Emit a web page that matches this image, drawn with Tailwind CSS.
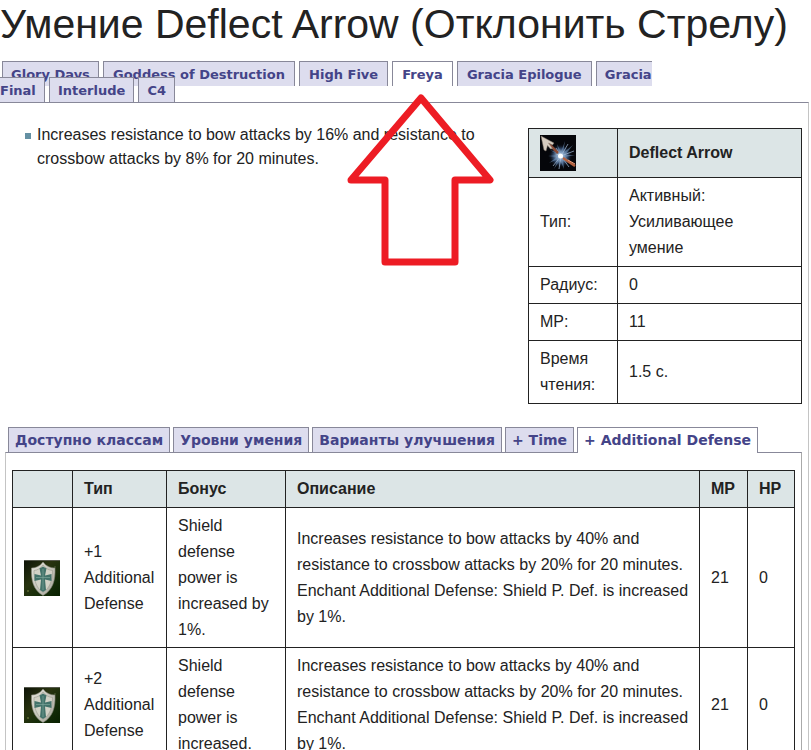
<!DOCTYPE html>
<html lang="ru">
<head>
    <meta charset="UTF-8">
    <meta name="viewport" content="width=device-width, initial-scale=1.0">
    <title>Умение Deflect Arrow (Отклонить Стрелу)</title>
    <script src="https://cdn.jsdelivr.net/npm/@tailwindcss/browser@4"></script>
</head>
<body class="bg-white text-[#222222] font-['Liberation_Sans',Arial,sans-serif] text-base">
    <!-- Shared shield icon -->
    <svg class="absolute size-0">
        <defs>
            <linearGradient id="shieldBg" x1="0" y1="0" x2="1" y2="1">
                <stop offset="0" stop-color="#0d1207" />
                <stop offset=".4" stop-color="#28330f" />
                <stop offset=".7" stop-color="#142c08" />
                <stop offset="1" stop-color="#082000" />
            </linearGradient>
            <linearGradient id="shieldFace" x1="0" y1="0" x2="1" y2="1">
                <stop offset="0" stop-color="#e6e5dc" />
                <stop offset="1" stop-color="#a5a599" />
            </linearGradient>
        </defs>
        <symbol id="shield" viewBox="0 0 36 36">
            <rect width="36" height="36" fill="url(#shieldBg)" />
            <path d="M0 .5H36" stroke="#55584c" />
            <circle cx="4" cy="31" r="1" fill="#5c6a30" />
            <circle cx="31" cy="7" r="1" fill="#41502a" />
            <path d="M19 2C16 6 12 8 7.500 8C7 20 9 30 19 35.500C29 30 31.500 20 31 8C26 8 22 6 19 2Z" fill="url(#shieldFace)" stroke="#85867b" stroke-width=".6" />
            <path d="M19 5C16.500 8.500 14 10 10 10.500C10 20 12 28 19 32.500C26 28 28.500 20 28.500 10.500C24.500 10 21.500 8.500 19 5Z" fill="#d2d2c6" stroke="#9a9b8f" stroke-width=".6" />
            <path d="M15.500 8.500L19 6.500L22.500 8.500L21 15.500L27.500 14V21L21 19.500L22 30L19 32L16 30L17 19.500L10.500 21V14L17 15.500Z" fill="#43736a" />
            <path d="M19 9V30M12 17.500H26" stroke="#7ba398" stroke-width=".7" />
        </symbol>
    </svg>

    <h1 class="text-[41px] leading-[48px] whitespace-nowrap">Умение Deflect Arrow (Отклонить Стрелу)</h1>

    <!-- Chronicle tabs -->
    <nav class="pt-[19px] pb-[3px]">
        <ul class="max-w-[690px] indent-[2px] font-['DejaVu_Sans',Verdana,sans-serif] text-[13px] leading-[16px]">
            <li class="inline"><a href="#" class="border border-b-0 border-[#888899] bg-[#ddddee] px-[8px] pt-[5px] pb-[4px] font-bold text-[#444488]">Glory Days</a></li>
            <li class="inline"><a href="#" class="border border-b-0 border-[#888899] bg-[#ddddee] px-[9px] pt-[5px] pb-[4px] font-bold text-[#444488]">Goddess of Destruction</a></li>
            <li class="inline"><a href="#" class="border border-b-0 border-[#888899] bg-[#ddddee] px-[9px] pt-[5px] pb-[4px] font-bold text-[#444488]">High Five</a></li>
            <li class="inline"><a href="#" class="border border-b-0 border-[#888899] bg-white px-[9px] pt-[5px] pb-[4px] font-bold text-[#444488]">Freya</a></li>
            <li class="inline"><a href="#" class="border border-b-0 border-[#888899] bg-[#ddddee] px-[9px] pt-[5px] pb-[4px] font-bold text-[#444488]">Gracia Epilogue</a></li>
            <li class="inline"><a href="#" class="border border-b-0 border-[#888899] bg-[#ddddee] px-[8px] pt-[5px] pb-[4px] font-bold text-[#444488]">Gracia Final</a></li>
            <li class="inline"><a href="#" class="border border-b-0 border-[#888899] bg-[#ddddee] px-[8px] pt-[5px] pb-[4px] font-bold text-[#444488]">Interlude</a></li>
            <li class="inline"><a href="#" class="border border-b-0 border-[#888899] bg-[#ddddee] px-[8px] pt-[5px] pb-[4px] font-bold text-[#444488]">C4</a></li>
        </ul>
    </nav>

    <main class="relative mr-[2px] border-t border-r border-t-[#888899] border-r-[#c4c4c4]">
        <!-- Pointer to the active tab -->
        <svg class="absolute -top-[11px] left-[346px]" width="150" height="176" viewBox="0 0 150 176" fill="none">
            <path d="M75 6L144 88H109V170H39V88H5Z" stroke="#ed1c24" stroke-width="7" stroke-linejoin="round" />
        </svg>

        <div class="flex items-start justify-between pt-[20px] pr-[6px] pl-[25px]">
            <ul class="w-[452px]">
                <li class="flex gap-[6px] leading-[24px]">
                    <span class="mt-[10px] size-[6px] shrink-0 bg-[#6490a3]"></span>
                    <span>Increases resistance to bow attacks by 16% and resistance to crossbow attacks by 8% for 20 minutes.</span>
                </li>
            </ul>

            <table class="mt-[5px] w-[274px] table-fixed border-collapse leading-[26px]">
                <colgroup>
                    <col class="w-[89px]">
                    <col>
                </colgroup>
                <tr class="bg-[#dce5e6]">
                    <th class="border border-[#222222] px-[11px] py-[6px] text-left">
                        <svg class="block" width="36" height="36" viewBox="0 0 36 36">
                            <defs>
                                <radialGradient id="glow">
                                    <stop offset="0" stop-color="#ffffff" />
                                    <stop offset=".3" stop-color="#9fb8d4" />
                                    <stop offset=".65" stop-color="#3f5f8c" stop-opacity=".6" />
                                    <stop offset="1" stop-color="#0a0e18" stop-opacity="0" />
                                </radialGradient>
                            </defs>
                            <rect width="36" height="36" fill="#05060a" />
                            <circle cx="20.500" cy="21" r="12" fill="url(#glow)" />
                            <path d="M21 21L10 15L19 18L17 9L21 17L25 6L23 18L33 10L25 20L35 20L25 22L32 28L23 24L24 34L20 25L14 34L18 24L9 28L17 22L8 21L18 20Z" fill="#6e8fb5" fill-opacity=".6" />
                            <path d="M21 21L16 13M21 21L28 9M21 21L13 31M21 21L29 32M21 21L34 16M21 21L19 34" stroke="#a9c0dc" stroke-width=".7" />
                            <path d="M7 7L18 18" stroke="#8a4a36" stroke-width="2.500" />
                            <path d="M23 23L35 31" stroke="#b3603e" stroke-width="2.500" />
                            <path d="M28 25L35 29" stroke="#e9a07d" stroke-width="1" />
                            <path d="M1 1L14 8L12.500 10L8.500 8L12.500 13.500L10.500 14L7.500 10.500L6 16L4 15Z" fill="#d5cbbf" stroke="#85796d" stroke-width=".5" />
                            <circle cx="20.500" cy="21" r="2.500" fill="#ffffff" />
                        </svg>
                    </th>
                    <th class="border border-[#222222] px-[11px] py-[6px] text-left">Deflect Arrow</th>
                </tr>
                <tr>
                    <td class="border border-[#222222] px-[11px] py-[5px]">Тип:</td>
                    <td class="border border-[#222222] px-[11px] py-[5px]">Активный:<br>Усиливающее умение</td>
                </tr>
                <tr>
                    <td class="border border-[#222222] px-[11px] py-[5px]">Радиус:</td>
                    <td class="border border-[#222222] px-[11px] py-[5px]">0</td>
                </tr>
                <tr>
                    <td class="border border-[#222222] px-[11px] py-[5px]">MP:</td>
                    <td class="border border-[#222222] px-[11px] py-[5px]">11</td>
                </tr>
                <tr>
                    <td class="border border-[#222222] px-[11px] py-[5px]">Время чтения:</td>
                    <td class="border border-[#222222] px-[11px] py-[5px]">1.5 с.</td>
                </tr>
            </table>
        </div>

        <!-- Skill details tabs -->
        <nav class="mt-[23px] ml-[8px]">
            <ul class="flex gap-[3px] font-['DejaVu_Sans',Verdana,sans-serif] text-[14px] leading-[16px] font-bold whitespace-nowrap text-[#444488]">
                <li><a href="#" class="block border border-b-0 border-[#888899] bg-[#ddddee] px-[6px] py-[4px]">Доступно классам</a></li>
                <li><a href="#" class="block border border-b-0 border-[#888899] bg-[#ddddee] px-[6px] py-[4px]">Уровни умения</a></li>
                <li><a href="#" class="block border border-b-0 border-[#888899] bg-[#ddddee] px-[6px] py-[4px]">Варианты улучшения</a></li>
                <li><a href="#" class="block border border-b-0 border-[#888899] bg-[#ddddee] px-[6px] py-[4px]">+ Time</a></li>
                <li><a href="#" class="relative -mb-px block border border-b-0 border-[#888899] bg-white px-[6px] pt-[4px] pb-[5px]">+ Additional Defense</a></li>
            </ul>
        </nav>

        <section class="mr-[6px] ml-[5px] border border-b-0 border-t-[#888899] border-r-[#aaaaaa] border-l-[#c4c4c4] px-[6px] pt-[17px]">
            <table class="w-full table-fixed border-collapse leading-[26px]">
                <colgroup>
                    <col class="w-[60px]">
                    <col class="w-[94px]">
                    <col class="w-[119px]">
                    <col>
                    <col class="w-[48px]">
                    <col class="w-[47px]">
                </colgroup>
                <thead>
                    <tr class="bg-[#dce5e6] text-left">
                        <th class="border border-[#222222] px-[11px] py-[5px]"></th>
                        <th class="border border-[#222222] px-[11px] py-[5px]">Тип</th>
                        <th class="border border-[#222222] px-[11px] py-[5px]">Бонус</th>
                        <th class="border border-[#222222] px-[11px] py-[5px]">Описание</th>
                        <th class="border border-[#222222] px-[11px] py-[5px]">MP</th>
                        <th class="border border-[#222222] px-[11px] py-[5px]">HP</th>
                    </tr>
                </thead>
                <tbody>
                    <tr>
                        <td class="border border-[#222222] px-[11px] pt-[5px] pb-[4px]"><svg class="block size-[36px]"><use href="#shield" /></svg></td>
                        <td class="border border-[#222222] px-[11px] pt-[5px] pb-[4px]">+1 Additional Defense</td>
                        <td class="border border-[#222222] px-[11px] pt-[5px] pb-[4px]">Shield defense power is increased by 1%.</td>
                        <td class="border border-[#222222] pt-[5px] pr-[8px] pb-[4px] pl-[11px]">Increases resistance to bow attacks by 40% and resistance to crossbow attacks by 20% for 20 minutes. Enchant Additional Defense: Shield P. Def. is increased by 1%.</td>
                        <td class="border border-[#222222] px-[11px] pt-[5px] pb-[4px]">21</td>
                        <td class="border border-[#222222] px-[11px] pt-[5px] pb-[4px]">0</td>
                    </tr>
                    <tr>
                        <td class="border border-[#222222] px-[11px] pt-[5px] pb-[4px]"><svg class="block size-[36px]"><use href="#shield" /></svg></td>
                        <td class="border border-[#222222] px-[11px] pt-[5px] pb-[4px]">+2 Additional Defense</td>
                        <td class="border border-[#222222] px-[11px] pt-[5px] pb-[4px]">Shield defense power is increased.</td>
                        <td class="border border-[#222222] pt-[5px] pr-[8px] pb-[4px] pl-[11px]">Increases resistance to bow attacks by 40% and resistance to crossbow attacks by 20% for 20 minutes. Enchant Additional Defense: Shield P. Def. is increased by 1%.</td>
                        <td class="border border-[#222222] px-[11px] pt-[5px] pb-[4px]">21</td>
                        <td class="border border-[#222222] px-[11px] pt-[5px] pb-[4px]">0</td>
                    </tr>
                </tbody>
            </table>
        </section>
    </main>
</body>
</html>
